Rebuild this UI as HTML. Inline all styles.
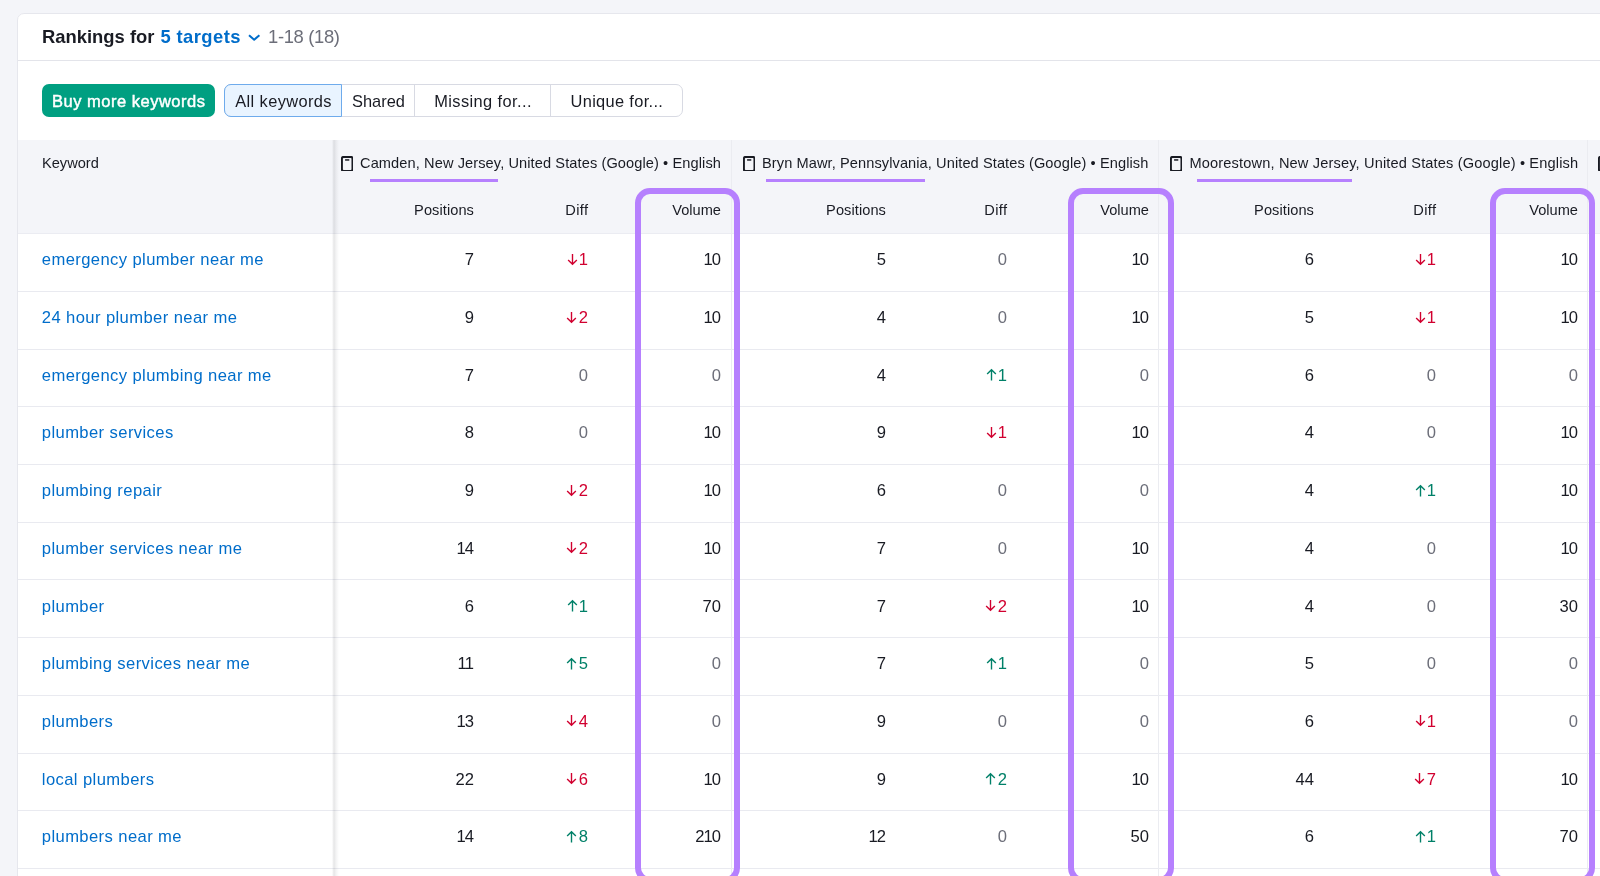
<!DOCTYPE html>
<html lang="en">
<head>
<meta charset="utf-8">
<title>Rankings for 5 targets</title>
<style>
html,body{margin:0;padding:0}
body{width:1600px;height:876px;overflow:hidden;background:#f4f5f9;position:relative;
 font-family:"Liberation Sans",Arial,sans-serif;color:#191b23;font-size:16.6px}
.root{position:absolute;left:0;top:0;width:1600px;height:876px;overflow:hidden;will-change:transform}
.card{position:absolute;left:17px;top:13px;width:1700px;height:1000px;background:#fff;
 border:1px solid #e6e7ed;border-radius:7px;box-sizing:border-box}
.title{position:absolute;left:42px;top:25px;height:24px;line-height:24px;font-size:18.4px;font-weight:700;white-space:nowrap}
.title .t1{position:absolute;left:0;top:0}
.title .t2{position:absolute;left:118.4px;top:0;color:#006dca;letter-spacing:0.42px}
.title .t3{position:absolute;left:226px;top:0;font-weight:400;color:#6c6e79;letter-spacing:-0.33px}
.title svg{position:absolute;left:206px;top:8.5px}
.hr{position:absolute;left:18px;top:60px;width:1600px;height:1px;background:#e3e4ea}
.buy{position:absolute;left:41.6px;top:84px;width:173.8px;height:33px;border-radius:7px;background:#009f81;color:#fff;
 font-weight:400;font-size:16.5px;line-height:34.4px;text-align:center;white-space:nowrap;letter-spacing:0.5px;-webkit-text-stroke:0.45px #fff;padding-left:0.5px;box-sizing:border-box}
.pills{position:absolute;left:224.4px;top:84px;height:33px;width:458.4px;box-sizing:border-box;border:1px solid #d8dae3;border-radius:7px;background:#fff}
.pill{padding-left:1.2px;position:absolute;top:-1px;height:33px;line-height:34.4px;box-sizing:border-box;text-align:center;white-space:nowrap;font-size:16.4px;color:#191b23}
.pill.a{letter-spacing:0.4px;left:-1px;width:117.2px;background:#e9f4ff;border:1px solid #6eabec;border-radius:7px 0 0 7px;line-height:32.4px}
.pill.b{left:116.2px;width:73.6px;border-right:1px solid #d8dae3}
.pill.c{letter-spacing:0.4px;left:189.8px;width:135.6px;border-right:1px solid #d8dae3}
.pill.d{letter-spacing:0.33px;left:325.4px;width:131px}
.thead{position:absolute;left:18px;top:140px;width:1600px;height:94px;background:#f4f5f9;box-sizing:border-box;border-bottom:1px solid #ebecf2}
.kwh{position:absolute;left:42px;top:152px;line-height:22px;font-size:14.6px}
.gh{position:absolute;top:152px;line-height:22px;font-size:14.6px;white-space:nowrap;letter-spacing:0.1px}
.ph{position:absolute;top:155.7px}
.ul{position:absolute;top:179px;height:3px;background:#b680fe}
.sh{position:absolute;top:199px;line-height:22px;font-size:14.6px;white-space:nowrap;text-align:right}
.sh.ps{letter-spacing:0.08px}
.sh.df{letter-spacing:0.34px;margin-left:0.34px}
.o{margin-left:-0.9px}
.o.m{margin-right:-1px}
.vdiv{position:absolute;top:140px;width:1px;height:800px;background:#ebecf1}
.edge{position:absolute;left:331.6px;top:140px;width:7px;height:800px;background:linear-gradient(to right,rgba(25,27,35,0) 0%,rgba(25,27,35,0.11) 28%,rgba(25,27,35,0.05) 58%,rgba(25,27,35,0) 100%)}
.row{position:absolute;left:18px;width:1600px;height:57.7px;box-sizing:border-box;border-bottom:1px solid #e9eaf0}
.kw{position:absolute;left:23.8px;top:15px;line-height:22px;color:#006dca;white-space:nowrap;letter-spacing:0.4px}
.cl{position:absolute;top:15px;line-height:22px;text-align:right;white-space:nowrap;width:120px}
.z{color:#6c6e79}
.dn{color:#d1002f}
.up{color:#008068}
.ar{display:inline-block;vertical-align:-0.5px;margin-right:1.5px}
.box{position:absolute;top:188px;height:695px;box-sizing:border-box;border:6.2px solid #b680fe;border-radius:15px}
</style>
</head>
<body>
<div class="root">
<div class="card"></div>
<div class="title"><span class="t1">Rankings for</span> <span class="t2">5 targets</span> <svg width="13" height="8" viewBox="0 0 13 8"><path d="M1 1.2L6.2 5.7L11.4 1.2" fill="none" stroke="#006dca" stroke-width="2" stroke-linejoin="round"/></svg> <span class="t3">1-18 (18)</span></div>
<div class="hr"></div>
<div class="buy">Buy more keywords</div>
<div class="pills"><div class="pill a">All keywords</div><div class="pill b">Shared</div><div class="pill c">Missing for...</div><div class="pill d">Unique for...</div></div>
<div class="thead"></div>
<div class="kwh">Keyword</div>

<div class="gh" style="left:360px;letter-spacing:0.095px">Camden, New Jersey, United States (Google) • English</div>
<svg class="ph" style="left:340.5px" viewBox="0 0 12.4 15.8" width="12.4" height="15.8"><rect x="0.9" y="0.9" width="10.6" height="14" rx="1.7" fill="none" stroke="#191b23" stroke-width="2"/><rect x="4.1" y="3.2" width="4.2" height="1.5" fill="#191b23"/></svg>
<div class="ul" style="left:370px;width:127.5px"></div>
<div class="sh ps" style="left:354px;width:120px">Positions</div>
<div class="sh df" style="left:468px;width:120px">Diff</div>
<div class="sh" style="left:601px;width:120px">Volume</div>
<div class="gh" style="left:762px;letter-spacing:0.086px">Bryn Mawr, Pennsylvania, United States (Google) • English</div>
<svg class="ph" style="left:742.5px" viewBox="0 0 12.4 15.8" width="12.4" height="15.8"><rect x="0.9" y="0.9" width="10.6" height="14" rx="1.7" fill="none" stroke="#191b23" stroke-width="2"/><rect x="4.1" y="3.2" width="4.2" height="1.5" fill="#191b23"/></svg>
<div class="ul" style="left:765.5px;width:159.5px"></div>
<div class="sh ps" style="left:766px;width:120px">Positions</div>
<div class="sh df" style="left:887px;width:120px">Diff</div>
<div class="sh" style="left:1029px;width:120px">Volume</div>
<div class="gh" style="left:1189.5px;letter-spacing:0.15px">Moorestown, New Jersey, United States (Google) • English</div>
<svg class="ph" style="left:1169.5px" viewBox="0 0 12.4 15.8" width="12.4" height="15.8"><rect x="0.9" y="0.9" width="10.6" height="14" rx="1.7" fill="none" stroke="#191b23" stroke-width="2"/><rect x="4.1" y="3.2" width="4.2" height="1.5" fill="#191b23"/></svg>
<div class="ul" style="left:1197px;width:155px"></div>
<div class="sh ps" style="left:1194px;width:120px">Positions</div>
<div class="sh df" style="left:1316px;width:120px">Diff</div>
<div class="sh" style="left:1458px;width:120px">Volume</div>
<svg class="ph" style="left:1598.2px" viewBox="0 0 12.4 15.8" width="12.4" height="15.8"><rect x="0.9" y="0.9" width="10.6" height="14" rx="1.7" fill="none" stroke="#191b23" stroke-width="2"/><rect x="4.1" y="3.2" width="4.2" height="1.5" fill="#191b23"/></svg>
<div class="row" style="top:234.30px"><div class="kw">emergency plumber near me</div>
<div class="cl" style="left:336px">7</div>
<div class="cl" style="left:450px"><span class="dn"><svg class="ar" viewBox="0 0 11 13" width="11" height="13"><path d="M5.5 0.9V11.2M1.15 6.95L5.5 11.3L9.85 6.95" fill="none" stroke="currentColor" stroke-width="1.38" stroke-linecap="butt" stroke-linejoin="miter"/></svg><span class="n"><span class="o">1</span></span></span></div>
<div class="cl" style="left:583px"><span class="o m">1</span>0</div>
<div class="cl" style="left:748px">5</div>
<div class="cl" style="left:869px"><span class="z">0</span></div>
<div class="cl" style="left:1011px"><span class="o m">1</span>0</div>
<div class="cl" style="left:1176px">6</div>
<div class="cl" style="left:1298px"><span class="dn"><svg class="ar" viewBox="0 0 11 13" width="11" height="13"><path d="M5.5 0.9V11.2M1.15 6.95L5.5 11.3L9.85 6.95" fill="none" stroke="currentColor" stroke-width="1.38" stroke-linecap="butt" stroke-linejoin="miter"/></svg><span class="n"><span class="o">1</span></span></span></div>
<div class="cl" style="left:1440px"><span class="o m">1</span>0</div>
</div>
<div class="row" style="top:292.00px"><div class="kw">24 hour plumber near me</div>
<div class="cl" style="left:336px">9</div>
<div class="cl" style="left:450px"><span class="dn"><svg class="ar" viewBox="0 0 11 13" width="11" height="13"><path d="M5.5 0.9V11.2M1.15 6.95L5.5 11.3L9.85 6.95" fill="none" stroke="currentColor" stroke-width="1.38" stroke-linecap="butt" stroke-linejoin="miter"/></svg><span class="n">2</span></span></div>
<div class="cl" style="left:583px"><span class="o m">1</span>0</div>
<div class="cl" style="left:748px">4</div>
<div class="cl" style="left:869px"><span class="z">0</span></div>
<div class="cl" style="left:1011px"><span class="o m">1</span>0</div>
<div class="cl" style="left:1176px">5</div>
<div class="cl" style="left:1298px"><span class="dn"><svg class="ar" viewBox="0 0 11 13" width="11" height="13"><path d="M5.5 0.9V11.2M1.15 6.95L5.5 11.3L9.85 6.95" fill="none" stroke="currentColor" stroke-width="1.38" stroke-linecap="butt" stroke-linejoin="miter"/></svg><span class="n"><span class="o">1</span></span></span></div>
<div class="cl" style="left:1440px"><span class="o m">1</span>0</div>
</div>
<div class="row" style="top:349.70px"><div class="kw">emergency plumbing near me</div>
<div class="cl" style="left:336px">7</div>
<div class="cl" style="left:450px"><span class="z">0</span></div>
<div class="cl" style="left:583px"><span class="z">0</span></div>
<div class="cl" style="left:748px">4</div>
<div class="cl" style="left:869px"><span class="up"><svg class="ar" viewBox="0 0 11 13" width="11" height="13"><path d="M5.5 12.4V1.8M1.15 6.05L5.5 1.7L9.85 6.05" fill="none" stroke="currentColor" stroke-width="1.38" stroke-linecap="butt" stroke-linejoin="miter"/></svg><span class="n"><span class="o">1</span></span></span></div>
<div class="cl" style="left:1011px"><span class="z">0</span></div>
<div class="cl" style="left:1176px">6</div>
<div class="cl" style="left:1298px"><span class="z">0</span></div>
<div class="cl" style="left:1440px"><span class="z">0</span></div>
</div>
<div class="row" style="top:407.40px"><div class="kw">plumber services</div>
<div class="cl" style="left:336px">8</div>
<div class="cl" style="left:450px"><span class="z">0</span></div>
<div class="cl" style="left:583px"><span class="o m">1</span>0</div>
<div class="cl" style="left:748px">9</div>
<div class="cl" style="left:869px"><span class="dn"><svg class="ar" viewBox="0 0 11 13" width="11" height="13"><path d="M5.5 0.9V11.2M1.15 6.95L5.5 11.3L9.85 6.95" fill="none" stroke="currentColor" stroke-width="1.38" stroke-linecap="butt" stroke-linejoin="miter"/></svg><span class="n"><span class="o">1</span></span></span></div>
<div class="cl" style="left:1011px"><span class="o m">1</span>0</div>
<div class="cl" style="left:1176px">4</div>
<div class="cl" style="left:1298px"><span class="z">0</span></div>
<div class="cl" style="left:1440px"><span class="o m">1</span>0</div>
</div>
<div class="row" style="top:465.10px"><div class="kw">plumbing repair</div>
<div class="cl" style="left:336px">9</div>
<div class="cl" style="left:450px"><span class="dn"><svg class="ar" viewBox="0 0 11 13" width="11" height="13"><path d="M5.5 0.9V11.2M1.15 6.95L5.5 11.3L9.85 6.95" fill="none" stroke="currentColor" stroke-width="1.38" stroke-linecap="butt" stroke-linejoin="miter"/></svg><span class="n">2</span></span></div>
<div class="cl" style="left:583px"><span class="o m">1</span>0</div>
<div class="cl" style="left:748px">6</div>
<div class="cl" style="left:869px"><span class="z">0</span></div>
<div class="cl" style="left:1011px"><span class="z">0</span></div>
<div class="cl" style="left:1176px">4</div>
<div class="cl" style="left:1298px"><span class="up"><svg class="ar" viewBox="0 0 11 13" width="11" height="13"><path d="M5.5 12.4V1.8M1.15 6.05L5.5 1.7L9.85 6.05" fill="none" stroke="currentColor" stroke-width="1.38" stroke-linecap="butt" stroke-linejoin="miter"/></svg><span class="n"><span class="o">1</span></span></span></div>
<div class="cl" style="left:1440px"><span class="o m">1</span>0</div>
</div>
<div class="row" style="top:522.80px"><div class="kw">plumber services near me</div>
<div class="cl" style="left:336px"><span class="o m">1</span>4</div>
<div class="cl" style="left:450px"><span class="dn"><svg class="ar" viewBox="0 0 11 13" width="11" height="13"><path d="M5.5 0.9V11.2M1.15 6.95L5.5 11.3L9.85 6.95" fill="none" stroke="currentColor" stroke-width="1.38" stroke-linecap="butt" stroke-linejoin="miter"/></svg><span class="n">2</span></span></div>
<div class="cl" style="left:583px"><span class="o m">1</span>0</div>
<div class="cl" style="left:748px">7</div>
<div class="cl" style="left:869px"><span class="z">0</span></div>
<div class="cl" style="left:1011px"><span class="o m">1</span>0</div>
<div class="cl" style="left:1176px">4</div>
<div class="cl" style="left:1298px"><span class="z">0</span></div>
<div class="cl" style="left:1440px"><span class="o m">1</span>0</div>
</div>
<div class="row" style="top:580.50px"><div class="kw">plumber</div>
<div class="cl" style="left:336px">6</div>
<div class="cl" style="left:450px"><span class="up"><svg class="ar" viewBox="0 0 11 13" width="11" height="13"><path d="M5.5 12.4V1.8M1.15 6.05L5.5 1.7L9.85 6.05" fill="none" stroke="currentColor" stroke-width="1.38" stroke-linecap="butt" stroke-linejoin="miter"/></svg><span class="n"><span class="o">1</span></span></span></div>
<div class="cl" style="left:583px">70</div>
<div class="cl" style="left:748px">7</div>
<div class="cl" style="left:869px"><span class="dn"><svg class="ar" viewBox="0 0 11 13" width="11" height="13"><path d="M5.5 0.9V11.2M1.15 6.95L5.5 11.3L9.85 6.95" fill="none" stroke="currentColor" stroke-width="1.38" stroke-linecap="butt" stroke-linejoin="miter"/></svg><span class="n">2</span></span></div>
<div class="cl" style="left:1011px"><span class="o m">1</span>0</div>
<div class="cl" style="left:1176px">4</div>
<div class="cl" style="left:1298px"><span class="z">0</span></div>
<div class="cl" style="left:1440px">30</div>
</div>
<div class="row" style="top:638.20px"><div class="kw">plumbing services near me</div>
<div class="cl" style="left:336px"><span class="o m">1</span><span class="o">1</span></div>
<div class="cl" style="left:450px"><span class="up"><svg class="ar" viewBox="0 0 11 13" width="11" height="13"><path d="M5.5 12.4V1.8M1.15 6.05L5.5 1.7L9.85 6.05" fill="none" stroke="currentColor" stroke-width="1.38" stroke-linecap="butt" stroke-linejoin="miter"/></svg><span class="n">5</span></span></div>
<div class="cl" style="left:583px"><span class="z">0</span></div>
<div class="cl" style="left:748px">7</div>
<div class="cl" style="left:869px"><span class="up"><svg class="ar" viewBox="0 0 11 13" width="11" height="13"><path d="M5.5 12.4V1.8M1.15 6.05L5.5 1.7L9.85 6.05" fill="none" stroke="currentColor" stroke-width="1.38" stroke-linecap="butt" stroke-linejoin="miter"/></svg><span class="n"><span class="o">1</span></span></span></div>
<div class="cl" style="left:1011px"><span class="z">0</span></div>
<div class="cl" style="left:1176px">5</div>
<div class="cl" style="left:1298px"><span class="z">0</span></div>
<div class="cl" style="left:1440px"><span class="z">0</span></div>
</div>
<div class="row" style="top:695.90px"><div class="kw">plumbers</div>
<div class="cl" style="left:336px"><span class="o m">1</span>3</div>
<div class="cl" style="left:450px"><span class="dn"><svg class="ar" viewBox="0 0 11 13" width="11" height="13"><path d="M5.5 0.9V11.2M1.15 6.95L5.5 11.3L9.85 6.95" fill="none" stroke="currentColor" stroke-width="1.38" stroke-linecap="butt" stroke-linejoin="miter"/></svg><span class="n">4</span></span></div>
<div class="cl" style="left:583px"><span class="z">0</span></div>
<div class="cl" style="left:748px">9</div>
<div class="cl" style="left:869px"><span class="z">0</span></div>
<div class="cl" style="left:1011px"><span class="z">0</span></div>
<div class="cl" style="left:1176px">6</div>
<div class="cl" style="left:1298px"><span class="dn"><svg class="ar" viewBox="0 0 11 13" width="11" height="13"><path d="M5.5 0.9V11.2M1.15 6.95L5.5 11.3L9.85 6.95" fill="none" stroke="currentColor" stroke-width="1.38" stroke-linecap="butt" stroke-linejoin="miter"/></svg><span class="n"><span class="o">1</span></span></span></div>
<div class="cl" style="left:1440px"><span class="z">0</span></div>
</div>
<div class="row" style="top:753.60px"><div class="kw">local plumbers</div>
<div class="cl" style="left:336px">22</div>
<div class="cl" style="left:450px"><span class="dn"><svg class="ar" viewBox="0 0 11 13" width="11" height="13"><path d="M5.5 0.9V11.2M1.15 6.95L5.5 11.3L9.85 6.95" fill="none" stroke="currentColor" stroke-width="1.38" stroke-linecap="butt" stroke-linejoin="miter"/></svg><span class="n">6</span></span></div>
<div class="cl" style="left:583px"><span class="o m">1</span>0</div>
<div class="cl" style="left:748px">9</div>
<div class="cl" style="left:869px"><span class="up"><svg class="ar" viewBox="0 0 11 13" width="11" height="13"><path d="M5.5 12.4V1.8M1.15 6.05L5.5 1.7L9.85 6.05" fill="none" stroke="currentColor" stroke-width="1.38" stroke-linecap="butt" stroke-linejoin="miter"/></svg><span class="n">2</span></span></div>
<div class="cl" style="left:1011px"><span class="o m">1</span>0</div>
<div class="cl" style="left:1176px">44</div>
<div class="cl" style="left:1298px"><span class="dn"><svg class="ar" viewBox="0 0 11 13" width="11" height="13"><path d="M5.5 0.9V11.2M1.15 6.95L5.5 11.3L9.85 6.95" fill="none" stroke="currentColor" stroke-width="1.38" stroke-linecap="butt" stroke-linejoin="miter"/></svg><span class="n">7</span></span></div>
<div class="cl" style="left:1440px"><span class="o m">1</span>0</div>
</div>
<div class="row" style="top:811.30px"><div class="kw">plumbers near me</div>
<div class="cl" style="left:336px"><span class="o m">1</span>4</div>
<div class="cl" style="left:450px"><span class="up"><svg class="ar" viewBox="0 0 11 13" width="11" height="13"><path d="M5.5 12.4V1.8M1.15 6.05L5.5 1.7L9.85 6.05" fill="none" stroke="currentColor" stroke-width="1.38" stroke-linecap="butt" stroke-linejoin="miter"/></svg><span class="n">8</span></span></div>
<div class="cl" style="left:583px">2<span class="o m">1</span>0</div>
<div class="cl" style="left:748px"><span class="o m">1</span>2</div>
<div class="cl" style="left:869px"><span class="z">0</span></div>
<div class="cl" style="left:1011px">50</div>
<div class="cl" style="left:1176px">6</div>
<div class="cl" style="left:1298px"><span class="up"><svg class="ar" viewBox="0 0 11 13" width="11" height="13"><path d="M5.5 12.4V1.8M1.15 6.05L5.5 1.7L9.85 6.05" fill="none" stroke="currentColor" stroke-width="1.38" stroke-linecap="butt" stroke-linejoin="miter"/></svg><span class="n"><span class="o">1</span></span></span></div>
<div class="cl" style="left:1440px">70</div>
</div>
<div class="vdiv" style="left:731px"></div>
<div class="vdiv" style="left:1158px"></div>
<div class="vdiv" style="left:1587px"></div>
<div class="edge"></div>
<div class="box" style="left:635.2px;width:105.19999999999993px"></div>
<div class="box" style="left:1068.4px;width:105.39999999999986px"></div>
<div class="box" style="left:1490.4px;width:104.59999999999991px"></div>
</div>
</body></html>
